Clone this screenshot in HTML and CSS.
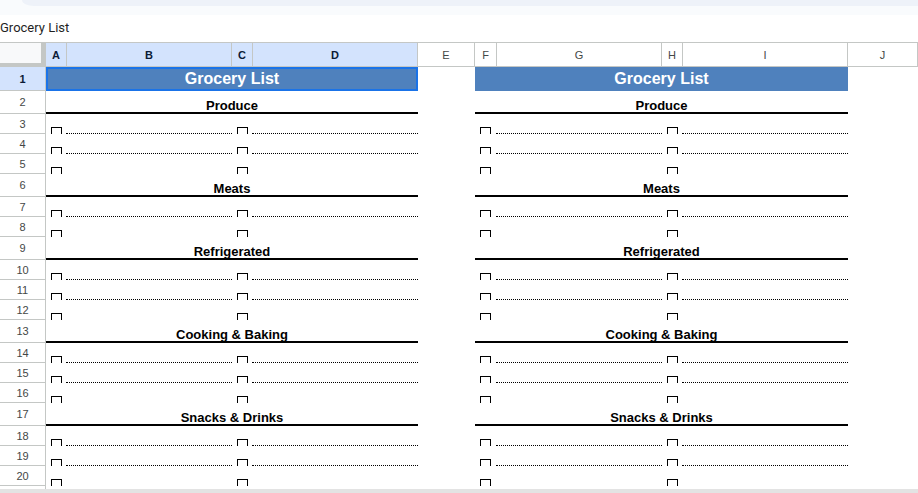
FILE: index.html
```html
<!DOCTYPE html>
<html lang="en">
<head>
<meta charset="utf-8">
<title>Grocery List</title>
<link rel="stylesheet" href="styles.css">
</head>
<body>
<div class="topbar"><div class="tab"></div></div>
<div class="docname">Grocery List</div>
<div class="sheet">
  <div class="row colhdr">
    <div class="corner"></div>
    <div class="ch sel">A</div><div class="ch sel">B</div><div class="ch sel">C</div><div class="ch sel">D</div>
    <div class="ch">E</div><div class="ch">F</div><div class="ch">G</div><div class="ch">H</div><div class="ch">I</div><div class="ch">J</div>
  </div>

  <div class="row title">
    <div class="rh sel">1</div>
    <div class="ttl active">Grocery List</div><div></div>
    <div class="ttl">Grocery List</div><div></div>
  </div>

  <div class="row sec"><div class="rh">2</div><div class="sc">Produce</div><div></div><div class="sc">Produce</div><div></div></div>
  <div class="row item"><div class="rh">3</div><div class="ck"><span class="box"></span></div><div class="ln"></div><div class="ck"><span class="box"></span></div><div class="ln"></div><div></div><div class="ck"><span class="box"></span></div><div class="ln"></div><div class="ck"><span class="box"></span></div><div class="ln"></div><div></div></div>
  <div class="row item"><div class="rh">4</div><div class="ck"><span class="box"></span></div><div class="ln"></div><div class="ck"><span class="box"></span></div><div class="ln"></div><div></div><div class="ck"><span class="box"></span></div><div class="ln"></div><div class="ck"><span class="box"></span></div><div class="ln"></div><div></div></div>
  <div class="row item"><div class="rh">5</div><div class="ck"><span class="box"></span></div><div></div><div class="ck"><span class="box"></span></div><div></div><div></div><div class="ck"><span class="box"></span></div><div></div><div class="ck"><span class="box"></span></div><div></div><div></div></div>

  <div class="row sec"><div class="rh">6</div><div class="sc">Meats</div><div></div><div class="sc">Meats</div><div></div></div>
  <div class="row item"><div class="rh">7</div><div class="ck"><span class="box"></span></div><div class="ln"></div><div class="ck"><span class="box"></span></div><div class="ln"></div><div></div><div class="ck"><span class="box"></span></div><div class="ln"></div><div class="ck"><span class="box"></span></div><div class="ln"></div><div></div></div>
  <div class="row item"><div class="rh">8</div><div class="ck"><span class="box"></span></div><div></div><div class="ck"><span class="box"></span></div><div></div><div></div><div class="ck"><span class="box"></span></div><div></div><div class="ck"><span class="box"></span></div><div></div><div></div></div>

  <div class="row sec"><div class="rh">9</div><div class="sc">Refrigerated</div><div></div><div class="sc">Refrigerated</div><div></div></div>
  <div class="row item"><div class="rh">10</div><div class="ck"><span class="box"></span></div><div class="ln"></div><div class="ck"><span class="box"></span></div><div class="ln"></div><div></div><div class="ck"><span class="box"></span></div><div class="ln"></div><div class="ck"><span class="box"></span></div><div class="ln"></div><div></div></div>
  <div class="row item"><div class="rh">11</div><div class="ck"><span class="box"></span></div><div class="ln"></div><div class="ck"><span class="box"></span></div><div class="ln"></div><div></div><div class="ck"><span class="box"></span></div><div class="ln"></div><div class="ck"><span class="box"></span></div><div class="ln"></div><div></div></div>
  <div class="row item"><div class="rh">12</div><div class="ck"><span class="box"></span></div><div></div><div class="ck"><span class="box"></span></div><div></div><div></div><div class="ck"><span class="box"></span></div><div></div><div class="ck"><span class="box"></span></div><div></div><div></div></div>

  <div class="row sec"><div class="rh">13</div><div class="sc">Cooking &amp; Baking</div><div></div><div class="sc">Cooking &amp; Baking</div><div></div></div>
  <div class="row item"><div class="rh">14</div><div class="ck"><span class="box"></span></div><div class="ln"></div><div class="ck"><span class="box"></span></div><div class="ln"></div><div></div><div class="ck"><span class="box"></span></div><div class="ln"></div><div class="ck"><span class="box"></span></div><div class="ln"></div><div></div></div>
  <div class="row item"><div class="rh">15</div><div class="ck"><span class="box"></span></div><div class="ln"></div><div class="ck"><span class="box"></span></div><div class="ln"></div><div></div><div class="ck"><span class="box"></span></div><div class="ln"></div><div class="ck"><span class="box"></span></div><div class="ln"></div><div></div></div>
  <div class="row item"><div class="rh">16</div><div class="ck"><span class="box"></span></div><div></div><div class="ck"><span class="box"></span></div><div></div><div></div><div class="ck"><span class="box"></span></div><div></div><div class="ck"><span class="box"></span></div><div></div><div></div></div>

  <div class="row sec"><div class="rh">17</div><div class="sc">Snacks &amp; Drinks</div><div></div><div class="sc">Snacks &amp; Drinks</div><div></div></div>
  <div class="row item"><div class="rh">18</div><div class="ck"><span class="box"></span></div><div class="ln"></div><div class="ck"><span class="box"></span></div><div class="ln"></div><div></div><div class="ck"><span class="box"></span></div><div class="ln"></div><div class="ck"><span class="box"></span></div><div class="ln"></div><div></div></div>
  <div class="row item"><div class="rh">19</div><div class="ck"><span class="box"></span></div><div class="ln"></div><div class="ck"><span class="box"></span></div><div class="ln"></div><div></div><div class="ck"><span class="box"></span></div><div class="ln"></div><div class="ck"><span class="box"></span></div><div class="ln"></div><div></div></div>
  <div class="row item"><div class="rh">20</div><div class="ck"><span class="box"></span></div><div></div><div class="ck"><span class="box"></span></div><div></div><div></div><div class="ck"><span class="box"></span></div><div></div><div class="ck"><span class="box"></span></div><div></div><div></div></div>

  <div class="row stub"><div class="rh"></div></div>
</div>
<div class="footer"></div>
</body>
</html>
```

FILE: styles.css
```css
* { box-sizing: border-box; }
html, body { margin: 0; padding: 0; }
body {
  width: 918px;
  height: 493px;
  overflow: hidden;
  background: #ffffff;
  font-family: "Liberation Sans", Arial, sans-serif;
  color: #000;
}
.topbar {
  height: 15px;
  background: #f9fbfd;
}
.tab {
  margin-left: 22px;
  height: 6px;
  background: #eef2f9;
  border-bottom-left-radius: 12px 6px;
}
.docname {
  height: 27px;
  padding-top: 5px;
  font-family: Roboto, "Open Sans", sans-serif;
  font-size: 13px;
  line-height: 16px;
  color: #1f1f1f;
  white-space: nowrap;
}
.row {
  display: grid;
  grid-template-columns: 46px 21px 165px 21px 165px 57px 22px 165px 21px 165px 1fr;
}
.colhdr {
  height: 25px;
  border-top: 1px solid #c4c7c5;
}
.corner {
  background: #f8f9fa;
  border-right: 5px solid #c4c7c5;
  border-bottom: 4px solid #c4c7c5;
}
.ch {
  display: flex;
  align-items: center;
  justify-content: center;
  border-right: 1px solid #c4c7c5;
  border-bottom: 1px solid #c4c7c5;
  font-size: 11px;
  color: #444746;
  padding-top: 1px;
}
.ch.sel {
  background: #d3e3fd;
  color: #0b1b36;
  font-weight: bold;
}
.rh {
  display: flex;
  align-items: center;
  justify-content: center;
  border-right: 1px solid #c4c7c5;
  border-bottom: 1px solid #c4c7c5;
  font-size: 11px;
  color: #444746;
  background: #fff;
}
.rh.sel {
  background: #d3e3fd;
  color: #0b1b36;
  font-weight: bold;
}
.title { height: 24px; }
.sec { height: 23px; }
.item { height: 20px; }
.stub { height: 3px; }
.stub .rh { border-bottom: 0; }

.ttl {
  grid-column: span 4;
  background: #4f81bd;
  color: #fff;
  font-weight: bold;
  font-size: 16px;
  line-height: 18px;
  display: flex;
  align-items: flex-end;
  justify-content: center;
  padding-bottom: 3px;
  white-space: nowrap;
}
.ttl.active {
  box-shadow: inset 0 0 0 2px #1a73e8;
}
.sc {
  grid-column: span 4;
  border-bottom: 2px solid #000;
  font-weight: bold;
  font-size: 13px;
  line-height: 13px;
  display: flex;
  align-items: flex-end;
  justify-content: center;
  white-space: nowrap;
}
.ck {
  display: flex;
  align-items: flex-end;
  padding-left: 5px;
}
.box {
  display: block;
  width: 11px;
  height: 7px;
  border: 1px solid #000;
  border-bottom: 0;
}
.ln {
  border-bottom: 1px dotted #000;
  margin-left: -1px;
}
.footer {
  height: 4px;
  background: #e3e3e3;
}
```
